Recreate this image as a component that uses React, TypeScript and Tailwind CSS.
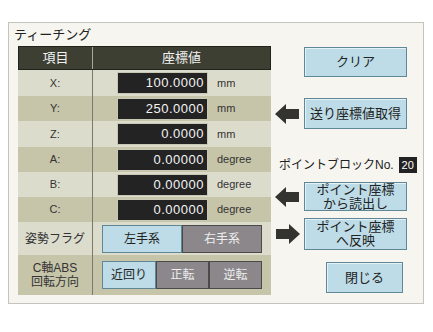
import React from "react";

const font = { fontFamily: '"Liberation Sans", "Noto Sans CJK JP", sans-serif' };

const rows = [
  { label: "X:", value: "100.0000", unit: "mm", h: "h-[26px]", bg: "bg-[#dcdccd]" },
  { label: "Y:", value: "250.0000", unit: "mm", h: "h-[25px]", bg: "bg-[#c6c4a9]" },
  { label: "Z:", value: "0.0000", unit: "mm", h: "h-[26px]", bg: "bg-[#dcdccd]" },
  { label: "A:", value: "0.00000", unit: "degree", h: "h-[25px]", bg: "bg-[#c6c4a9]" },
  { label: "B:", value: "0.00000", unit: "degree", h: "h-[25px]", bg: "bg-[#dcdccd]" },
  { label: "C:", value: "0.00000", unit: "degree", h: "h-[25px]", bg: "bg-[#c6c4a9]" },
];

const Arrow = ({ dir }: { dir: "left" | "right" }) => (
  <svg width="24" height="20" viewBox="0 0 24 20" className={dir === "right" ? "scale-x-[-1]" : ""}>
    <path d="M0 10 L11 0 L11 5 L24 5 L24 15 L11 15 L11 20 Z" fill="#333330" />
  </svg>
);

const BlueBtn = ({ children, cls }: { children: React.ReactNode; cls: string }) => (
  <div
    className={`flex flex-col items-center justify-center border border-[#5f8796] bg-[#bddce7] text-[13px] leading-[14px] text-[#222] shadow-[inset_1px_1px_0_#e4f2f7] ${cls}`}
  >
    {children}
  </div>
);

export default function App() {
  return (
    <div className="h-[332px] w-[433px] bg-white pl-[8px] pt-[22px]" style={font}>
      <div className="flex h-[282px] w-[416px] flex-col border border-[#c4c4bc] bg-[#f6f5ef]">
        <div className="h-[23px] pl-[5px] pt-[4px] text-[13px] leading-[16px] text-[#222]">ティーチング</div>
        <div className="flex">
          {/* table */}
          <div className="ml-[9px] w-[253px]">
            <div className="flex h-[24px] border border-[#22231c] bg-[#3d3f33] text-[13px] text-[#f2f2f2]">
              <div className="flex w-[74px] items-center justify-center border-r border-[#a8a89a]">項目</div>
              <div className="flex flex-1 items-center justify-center">座標値</div>
            </div>
            {rows.map((r) => (
              <div key={r.label} className={`flex ${r.h} ${r.bg}`}>
                <div className="flex w-[75px] items-center justify-center border-r border-[#7a7a6c] text-[11px] text-[#333]">
                  {r.label}
                </div>
                <div className="flex flex-1 items-center pl-[24px]">
                  <div className="flex h-[22px] w-[91px] items-center justify-end border border-[#c8c8b4] bg-[#232323] pr-[3px] text-[13px] tracking-[0.5px] text-[#f4f4f4]">
                    {r.value}
                  </div>
                  <div className="pl-[9px] text-[11px] text-[#333]">{r.unit}</div>
                </div>
              </div>
            ))}
            <div className="flex h-[33px] bg-[#dcdccd]">
              <div className="flex w-[75px] items-center justify-center border-r border-[#7a7a6c] text-[12px] text-[#333]">
                姿勢フラグ
              </div>
              <div className="flex flex-1 items-center pl-[9px]">
                <div className="flex h-[28px] w-[80px] items-center justify-center border border-[#5f8796] bg-[#bddce7] text-[12px] text-[#222]">
                  左手系
                </div>
                <div className="flex h-[28px] w-[80px] items-center justify-center border border-[#4a4a4a] bg-[#8b878b] text-[12px] text-[#eee]">
                  右手系
                </div>
              </div>
            </div>
            <div className="flex h-[40px] bg-[#c6c4a9]">
              <div className="flex w-[75px] flex-col items-center justify-center border-r border-[#7a7a6c] text-[12px] leading-[14px] text-[#333]">
                <span>C軸ABS</span>
                <span>回転方向</span>
              </div>
              <div className="flex flex-1 items-center pl-[9px]">
                <div className="flex h-[28px] w-[54px] items-center justify-center border border-[#5f8796] bg-[#bddce7] text-[12px] text-[#222]">
                  近回り
                </div>
                <div className="flex h-[28px] w-[53px] items-center justify-center border border-[#4a4a4a] bg-[#8b878b] text-[12px] text-[#eee]">
                  正転
                </div>
                <div className="flex h-[28px] w-[53px] items-center justify-center border border-[#4a4a4a] bg-[#8b878b] text-[12px] text-[#eee]">
                  逆転
                </div>
              </div>
            </div>
          </div>

          {/* right side */}
          <div className="flex flex-1 flex-col pl-[4px]">
            <div className="flex pl-[29px]">
              <BlueBtn cls="mt-[1px] h-[30px] w-[103px]">クリア</BlueBtn>
            </div>
            <div className="mt-[21px] flex items-center">
              <Arrow dir="left" />
              <BlueBtn cls="ml-[5px] h-[31px] w-[103px]">送り座標値取得</BlueBtn>
            </div>
            <div className="mt-[28px] flex h-[16px] items-center pl-[4px]">
              <span className="text-[12px] text-[#222]">ポイントブロックNo.</span>
              <div className="ml-[5px] flex h-[16px] w-[18px] items-center justify-center bg-[#222] text-[11px] text-white">
                20
              </div>
            </div>
            <div className="mt-[9px] flex items-center">
              <Arrow dir="left" />
              <BlueBtn cls="ml-[5px] h-[29px] w-[103px]">
                <span>ポイント座標</span>
                <span>から読出し</span>
              </BlueBtn>
            </div>
            <div className="mt-[7px] flex items-center">
              <div className="pl-[1px]">
                <Arrow dir="right" />
              </div>
              <BlueBtn cls="ml-[4px] h-[32px] w-[103px]">
                <span>ポイント座標</span>
                <span>へ反映</span>
              </BlueBtn>
            </div>
            <div className="mt-[12px] flex pl-[51px]">
              <BlueBtn cls="h-[31px] w-[77px]">閉じる</BlueBtn>
            </div>
          </div>
        </div>
      </div>
    </div>
  );
}
